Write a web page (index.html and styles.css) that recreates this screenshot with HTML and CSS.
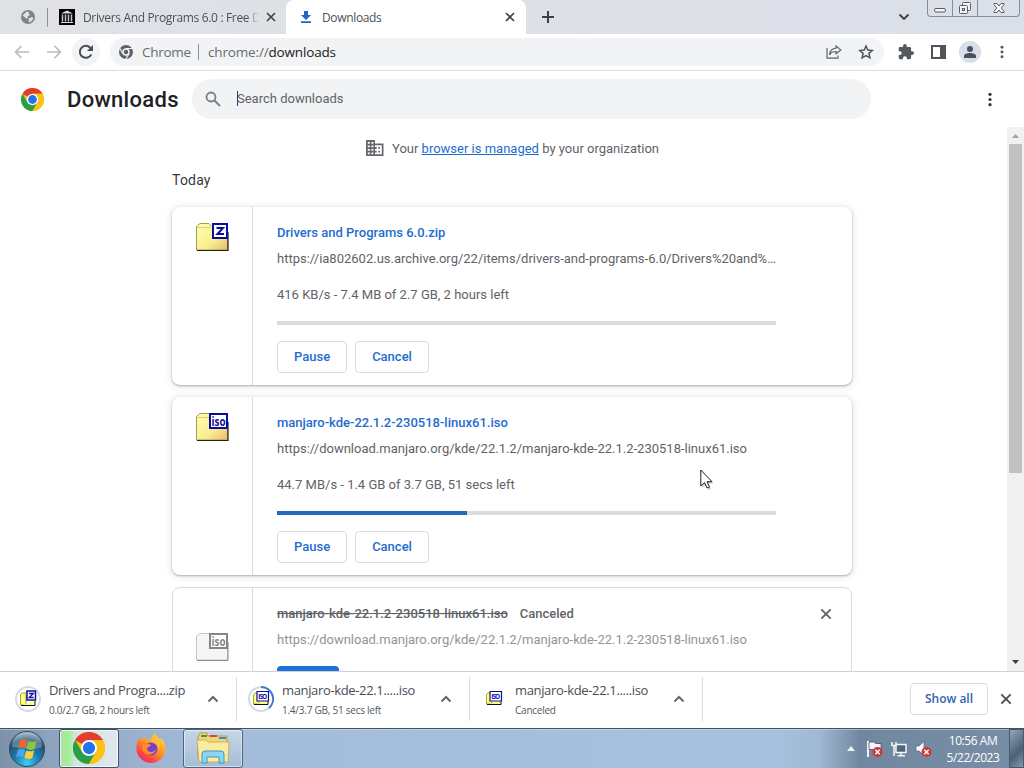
FILE: index.html
```html
<!DOCTYPE html>
<html lang="en">
<head>
    <meta charset="UTF-8">
    <meta name="viewport" content="width=device-width, initial-scale=1.0">
    <title>Downloads</title>
    <link rel="stylesheet" href="styles.css">
</head>
<body>

    <!-- Shared icons -->
    <svg class="defs" width="0" height="0">
        <defs>
            <linearGradient id="folder-fill" x1="0" y1="0" x2="1" y2="1">
                <stop offset="0" stop-color="#ffffb0"/>
                <stop offset="0.6" stop-color="#f8ee90"/>
                <stop offset="1" stop-color="#e6b870"/>
            </linearGradient>
            <radialGradient id="orb" cx="0.5" cy="0.9" r="0.9">
                <stop offset="0" stop-color="#3fd0f0"/>
                <stop offset="0.4" stop-color="#1b7cb4"/>
                <stop offset="0.75" stop-color="#24506f"/>
                <stop offset="1" stop-color="#9fb9c9"/>
            </radialGradient>
            <linearGradient id="fox" x1="0.9" y1="0" x2="0.2" y2="1">
                <stop offset="0" stop-color="#ffe14a"/>
                <stop offset="0.45" stop-color="#ff9a26"/>
                <stop offset="0.8" stop-color="#fb4343"/>
                <stop offset="1" stop-color="#ee2474"/>
            </linearGradient>
            <symbol id="chrome" viewBox="0 0 48 48">
                <circle cx="24" cy="24" r="24" fill="#fbc116"/>
                <path d="M24 24 3.2 12A24 24 0 0 1 44.8 12H24z" fill="#e33b2e"/>
                <path d="M3.2 12A24 24 0 0 0 24 48L34.4 30 24 24 13.6 30z" fill="#2a9f48"/>
                <path d="M24 12h20.8A24 24 0 0 1 24 48l10.4-18z" fill="#fbc116"/>
                <circle cx="24" cy="24" r="12" fill="#fff"/>
                <circle cx="24" cy="24" r="9.2" fill="#2274e8"/>
            </symbol>
            <symbol id="close" viewBox="0 0 12 12">
                <path d="M2 2l8 8M10 2l-8 8" stroke="currentColor" stroke-width="1.6" fill="none"/>
            </symbol>
            <symbol id="chevron-up" viewBox="0 0 12 12">
                <path d="M1.5 8.5 6 4l4.5 4.5" stroke="currentColor" stroke-width="2" fill="none"/>
            </symbol>
            <symbol id="folder" viewBox="0 0 33 30">
                <path d="M.5 28V4.5L4 1.5h9l3 3h15.500V28z" fill="url(#folder-fill)" stroke="#a59d4c"/>
                <path d="M1 28.500h31V10" fill="none" stroke="#26220c" stroke-width="1.200"/>
                <path d="M1 5.500h14" fill="none" stroke="#d8d080"/>
            </symbol>
            <symbol id="dots" viewBox="0 0 4 16">
                <circle cx="2" cy="2.500" r="1.700"/><circle cx="2" cy="8" r="1.700"/><circle cx="2" cy="13.500" r="1.700"/>
            </symbol>
        </defs>
    </svg>

    <div class="tab-strip">
        <div class="tab tab-pinned">
            <svg width="14" height="14" viewBox="0 0 14 14">
                <circle cx="7" cy="7" r="7" fill="#7f8388"/>
                <path d="M1.500 5.500 5 2l3-.5-.5 2L9 5 6.500 6.500 7 8l-2 .5-2-2z" fill="#dee1e6"/>
                <path d="M7.500 8.500 11 7l1.500 1-1.500 3-3 1.500z" fill="#dee1e6"/>
            </svg>
        </div>
        <div class="tab tab-archive">
            <svg width="16" height="16" viewBox="0 0 16 16">
                <path d="M0 0h16v16H0z" fill="#000"/>
                <path d="M2 4.500 8 1.500l6 3z" fill="#ddd"/>
                <path d="M3.500 5.500v7M6.500 5.500v7M9.500 5.500v7M12.500 5.500v7" stroke="#c8c8c8" stroke-width="1.500"/>
                <path d="M2 13.500h12" stroke="#ddd"/>
            </svg>
            <span class="tab-title">Drivers And Programs 6.0 : Free D</span>
            <svg class="tab-close" width="12" height="12"><use href="#close"/></svg>
        </div>
        <div class="tab tab-active">
            <svg width="10" height="12" viewBox="0 0 10 12">
                <path d="M3 0h4v4h3L5 9 0 4h3zM0 10.300h10V12H0z" fill="#1f66c8"/>
            </svg>
            <span class="tab-title">Downloads</span>
            <svg class="tab-close" width="12" height="12"><use href="#close"/></svg>
        </div>
        <svg class="new-tab" width="12" height="12" viewBox="0 0 12 12">
            <path d="M6 0v12M0 6h12" stroke="#3c4043" stroke-width="2"/>
        </svg>
        <svg class="tab-search" width="12" height="8" viewBox="0 0 12 8">
            <path d="M1.500 1.500 6 6l4.500-4.500" stroke="#3c4043" stroke-width="1.800" fill="none"/>
        </svg>
        <div class="window-controls">
            <span class="wc">
                <svg width="14" height="16" viewBox="0 0 14 16"><rect x="1.500" y="8.500" width="11" height="3.500" rx="1.500" fill="#f4f6f8" stroke="#555d68"/></svg>
            </span>
            <span class="wc">
                <svg width="14" height="16" viewBox="0 0 14 16" fill="#f4f6f8" stroke="#555d68">
                    <rect x="4.500" y="2.500" width="8" height="8" rx="1"/>
                    <rect x="1.500" y="5.500" width="8" height="8" rx="1"/>
                    <rect x="4.500" y="8.500" width="2" height="2"/>
                </svg>
            </span>
            <span class="wc wc-close">
                <svg width="14" height="16" viewBox="0 0 14 16"><path d="M2 3.500h3L7 6l2-2.500h3v1L9.300 8l2.700 3.500v1H9L7 10l-2 2.500H2v-1L4.700 8 2 4.500z" fill="#f4f6f8" stroke="#555d68"/></svg>
            </span>
        </div>
    </div>

    <div class="toolbar">
        <svg class="nav-back" width="16" height="14" viewBox="0 0 16 14"><path d="M15 7H2M7.500 1 1.500 7l6 6" fill="none" stroke="#b9bbbe" stroke-width="1.700"/></svg>
        <svg class="nav-forward" width="16" height="14" viewBox="0 0 16 14"><path d="M1 7h13M8.500 1l6 6-6 6" fill="none" stroke="#b9bbbe" stroke-width="1.700"/></svg>
        <span class="reload">
            <svg width="16" height="16" viewBox="0 0 16 16">
                <path d="M13.300 10.300A6 6 0 1 1 12.200 3.700L14 5.500" fill="none" stroke="#4a4d51" stroke-width="2"/>
                <path d="M15 1v6H9z" fill="#4a4d51"/>
            </svg>
        </span>
        <div class="omnibox">
            <svg width="14" height="14" viewBox="0 0 14 14">
                <circle cx="7" cy="7" r="7" fill="#5f6368"/>
                <circle cx="7" cy="7" r="3" fill="#5f6368" stroke="#f1f3f4" stroke-width="1.400"/>
                <path d="M7 3.500h6.300M4 8.800.9 3.500M10 8.800 6.800 14" stroke="#f1f3f4" stroke-width="1.200"/>
            </svg>
            <span class="origin">Chrome</span>
            <span class="divider"></span>
            <span class="url">chrome://<b>downloads</b></span>
            <svg class="share" width="16" height="14" viewBox="0 0 16 14" fill="none" stroke="#5f6368" stroke-width="1.200">
                <path d="M1 3v10.200h11V10.500"/>
                <path d="M10 1l4.800 3.900L10 8.800V6.500C7 6.400 5 7.500 3.500 9.800 4 6 6.300 3.600 10 3.200z"/>
            </svg>
            <svg class="star" width="16" height="16" viewBox="0 0 16 16">
                <path d="M8 2l1.800 4.100 4.500.4-3.400 2.900 1 4.400L8 11.500l-3.900 2.300 1-4.400L1.700 6.500l4.500-.4z" fill="none" stroke="#505458" stroke-width="1.500"/>
            </svg>
        </div>
        <svg class="ext" width="16" height="16" viewBox="1 1 22 22"><path d="M20.500 11H19V7a2 2 0 0 0-2-2h-4V3.500a2.500 2.500 0 0 0-5 0V5H4a2 2 0 0 0-2 2v3.800h1.500a2.700 2.700 0 0 1 0 5.400H2V20a2 2 0 0 0 2 2h3.800v-1.500a2.700 2.700 0 0 1 5.400 0V22H17a2 2 0 0 0 2-2v-4h1.500a2.500 2.500 0 0 0 0-5z" fill="#55585c"/></svg>
        <svg class="side-panel" width="15" height="14" viewBox="0 0 15 14"><path d="M0 0h15v14H0zM2 2v10h7V2z" fill="#505458" fill-rule="evenodd"/></svg>
        <span class="avatar">
            <svg width="12" height="12" viewBox="0 0 12 12"><circle cx="6" cy="3" r="3" fill="#48525e"/><path d="M0 12V10c0-2 3-3 6-3s6 1 6 3v2z" fill="#48525e"/></svg>
        </span>
        <svg class="menu" width="4" height="14" fill="#55585c"><use href="#dots"/></svg>
    </div>

    <header class="page-header">
        <svg width="23" height="23"><use href="#chrome"/></svg>
        <h1>Downloads</h1>
        <div class="search">
            <svg width="16" height="16" viewBox="0 0 16 16"><circle cx="6" cy="6" r="4.500" fill="none" stroke="#7c8084" stroke-width="1.800"/><path d="M9.500 9.500 15 15" stroke="#7c8084" stroke-width="2"/></svg>
            <span class="caret"></span><span class="placeholder">Search downloads</span>
        </div>
        <svg class="more" width="4" height="15" fill="#303338"><use href="#dots"/></svg>
    </header>

    <div class="page">
        <main class="downloads">
            <div class="managed">
                <svg width="18" height="16" viewBox="0 0 18 16">
                    <path d="M0 0h9v3.500h8.500V16H0z" fill="#65686c"/>
                    <path d="M1.800 2h2v1.700h-2zM5.400 2h2v1.700h-2zM1.800 5.500h2v1.700h-2zM5.400 5.500h2v1.700h-2zM1.800 9h2v1.700h-2zM5.400 9h2v1.700h-2zM1.800 12.500h2v1.700h-2zM5.400 12.500h2v1.700h-2zM9 5.200h6.800v9.100H9v-1.800h1.700v-1.700H9V9h1.700V7H9z" fill="#fff"/>
                    <path d="M12.300 7H14v1.800h-1.700zM12.300 10.700H14v1.800h-1.700z" fill="#65686c"/>
                </svg>
                <span>Your <a href="#">browser is managed</a> by your organization</span>
            </div>
            <div class="date">Today</div>

            <div class="card">
                <div class="file-icon">
                    <svg width="33" height="30" viewBox="0 0 33 30">
                        <use href="#folder"/>
                        <rect x="17" y="2" width="14" height="14" fill="#fff" stroke="#0c0c9c" stroke-width="2"/>
                        <path d="M20.500 6h6.500L21.500 12h6.500" fill="none" stroke="#0c0c9c" stroke-width="2"/>
                    </svg>
                </div>
                <div class="details">
                    <div class="name"><a>Drivers and Programs 6.0.zip</a></div>
                    <div class="link">https://ia802602.us.archive.org/22/items/drivers-and-programs-6.0/Drivers%20and%…</div>
                    <div class="status">416 KB/s - 7.4 MB of 2.7 GB, 2 hours left</div>
                    <div class="progress"><div class="bar" style="width: 0%"></div></div>
                    <div class="buttons"><button class="btn">Pause</button><button class="btn">Cancel</button></div>
                </div>
            </div>

            <div class="card">
                <div class="file-icon">
                    <svg width="33" height="30" viewBox="0 0 33 30">
                        <use href="#folder"/>
                        <rect x="14" y="2" width="17" height="14" fill="#fff" stroke="#0c0c9c" stroke-width="2"/>
                        <text class="iso" x="15.500" y="13.500" textLength="14" lengthAdjust="spacingAndGlyphs">iso</text>
                    </svg>
                </div>
                <div class="details">
                    <div class="name"><a>manjaro-kde-22.1.2-230518-linux61.iso</a></div>
                    <div class="link">https://download.manjaro.org/kde/22.1.2/manjaro-kde-22.1.2-230518-linux61.iso</div>
                    <div class="status">44.7 MB/s - 1.4 GB of 3.7 GB, 51 secs left</div>
                    <div class="progress"><div class="bar" style="width: 38%"></div></div>
                    <div class="buttons"><button class="btn">Pause</button><button class="btn">Cancel</button></div>
                </div>
            </div>

            <div class="card card-canceled">
                <div class="file-icon">
                    <svg width="33" height="30" viewBox="0 0 33 30">
                        <path d="M.5 28V4.500L4 1.500h9l3 3h15.500V28z" fill="#f6f6f6" stroke="#c4c4c4"/>
                        <path d="M1 28.500h31V10" fill="none" stroke="#8c8c8c"/>
                        <rect x="14" y="2" width="17" height="14" fill="#fff" stroke="#868686" stroke-width="2"/>
                        <text class="iso" x="15.500" y="13.500" textLength="14" lengthAdjust="spacingAndGlyphs">iso</text>
                    </svg>
                </div>
                <div class="details">
                    <div class="name"><s>manjaro-kde-22.1.2-230518-linux61.iso</s><span class="tag">Canceled</span>
                        <svg class="remove" width="14" height="14"><use href="#close"/></svg>
                    </div>
                    <div class="link">https://download.manjaro.org/kde/22.1.2/manjaro-kde-22.1.2-230518-linux61.iso</div>
                    <button class="btn btn-retry" aria-label="Retry"></button>
                </div>
            </div>
        </main>

        <div class="scrollbar">
            <svg width="7" height="4" viewBox="0 0 7 4"><path d="M0 4 3.500 0 7 4z" fill="#a3a3a3"/></svg>
            <div class="thumb"></div>
            <svg class="down" width="7" height="4" viewBox="0 0 7 4"><path d="M0 0 3.500 4 7 0z" fill="#404040"/></svg>
        </div>

        <svg class="cursor" width="16" height="23" viewBox="0 0 16 23">
            <path d="M2 3v16l4-3.500L8.500 21l2.500-1-2.500-5.500h5z" fill="#000" opacity="0.200"/>
            <path d="M.8 1v16l3.700-3.500L7 19l2.500-1-2.500-5.300h5z" fill="#fff" stroke="#222"/>
        </svg>
    </div>

    <div class="shelf">
        <div class="shelf-item">
            <svg width="26" height="26" viewBox="0 0 26 26">
                <circle cx="13" cy="13" r="12" fill="none" stroke="#cfdce8" stroke-width="2"/>
                <path d="M5.500 19V8.500L7 7h4v12z" fill="#ffff80" stroke="#a5a535"/><path d="M6 19.500h14V15" fill="#ffff80" stroke="#111"/>
                <path d="M12 5h8.500v9H12z" fill="#fff" stroke="#10109c" stroke-width="1.500"/>
                <path d="M14 7.500h4.300L14.200 11.500h4.500" fill="none" stroke="#10109c" stroke-width="1.300"/>
            </svg>
            <div class="shelf-text"><span class="shelf-name">Drivers and Progra....zip</span><small>0.0/2.7 GB, 2 hours left</small></div>
            <svg class="chev" width="12" height="12"><use href="#chevron-up"/></svg>
        </div>
        <div class="shelf-item">
            <svg width="26" height="26" viewBox="0 0 26 26">
                <circle cx="13" cy="13" r="12" fill="none" stroke="#cfdce8" stroke-width="2"/>
                <path d="M13 1a12 12 0 0 1 8 21" fill="none" stroke="#4678c8" stroke-width="2"/>
                <path d="M5.500 18V8.500L7 7h4v11z" fill="#ffff80" stroke="#a5a535"/><path d="M6 18.500h14V15" fill="#ffff80" stroke="#111"/>
                <path d="M9 5.500h11.500v9.500H9z" fill="#fff" stroke="#10109c" stroke-width="1.200"/>
                <text class="iso-small" x="10.200" y="12.800" textLength="9">ISO</text>
            </svg>
            <div class="shelf-text"><span class="shelf-name">manjaro-kde-22.1.....iso</span><small>1.4/3.7 GB, 51 secs left</small></div>
            <svg class="chev" width="12" height="12"><use href="#chevron-up"/></svg>
        </div>
        <div class="shelf-item">
            <svg width="26" height="26" viewBox="0 0 26 26">
                <path d="M5.500 18V8.500L7 7h4v11z" fill="#ffff80" stroke="#a5a535"/><path d="M6 18.500h14V15" fill="#ffff80" stroke="#111"/>
                <path d="M9 5.500h11.500v9.500H9z" fill="#fff" stroke="#10109c" stroke-width="1.200"/>
                <text class="iso-small" x="10.200" y="12.800" textLength="9">ISO</text>
            </svg>
            <div class="shelf-text"><span class="shelf-name">manjaro-kde-22.1.....iso</span><small>Canceled</small></div>
            <svg class="chev" width="12" height="12"><use href="#chevron-up"/></svg>
        </div>
        <button class="show-all">Show all</button>
        <svg class="shelf-close" width="14" height="14"><use href="#close"/></svg>
    </div>

    <div class="taskbar">
        <svg class="start" width="38" height="38" viewBox="0 0 38 38">
            <circle cx="19" cy="19" r="17.500" fill="url(#orb)" stroke="#2c4a63"/>
            <path d="M4 17a15 15 0 0 1 30 0c-9 4-20 0-30 0z" fill="#fff" opacity="0.250"/>
            <path d="M12 10.500c2.500-1.700 5-1.700 7.300-.3L17.500 18c-2.300-1.200-4.700-1-7.300.5z" fill="#f0662e"/>
            <path d="M20.500 11c2.500 1.200 5.200 1.200 8-.3L26.500 19c-2.700 1.300-5.300 1.100-8-.2z" fill="#8cc63e"/>
            <path d="M9.800 20c2.600-1.500 5-1.500 7.300-.3L15.300 27c-2.300-1.200-4.700-1-7.300.5z" fill="#4aa6e4"/>
            <path d="M18.200 20.500c2.500 1.200 5.200 1.200 8-.3L24.300 28c-2.700 1.300-5.300 1.100-8-.2z" fill="#fccf3a"/>
        </svg>
        <div class="task task-chrome"><svg width="32" height="32"><use href="#chrome"/></svg></div>
        <div class="task task-firefox">
            <svg width="32" height="32" viewBox="0 0 32 32">
                <path d="M20 1c1 3 3 4 5 7l1-2c4 4 5 8 4.500 12A14.600 14.600 0 0 1 1.500 18C1 13 2 9 5 5l1.500 3 3-3.500L12 8l4-1c1-2 2-4 4-6z" fill="url(#fox)"/>
                <circle cx="16" cy="17" r="6.500" fill="#7140d0"/>
                <path d="M8 12c3-2 6 0 8 1-1 2-4 2-4 4 1 4 7 4 9 0-1 7-12 8-14 0z" fill="#ff8a2a"/>
                <path d="M16 10c5-1 8 3 7 8 4-5 1-12-5-12z" fill="#ffbd38"/>
            </svg>
        </div>
        <div class="task task-explorer">
            <svg width="34" height="32" viewBox="0 0 34 32">
                <path d="M2 5 4 1h7l1 3h19v22H2z" fill="#f0d67b" stroke="#b28c34" stroke-width="0.800"/>
                <path d="M5 3h6v2H5z" fill="#35a04c"/><path d="M14 3h7v2h-7z" fill="#d9482e"/><path d="M23 5h7v2h-7z" fill="#3c86d8"/>
                <path d="M1 8h9l2 2h21l-1 20H3z" fill="#faeba0" stroke="#c7a548" stroke-width="0.800"/>
                <path d="M6 31V22q0-3 3-3h16q3 0 3 3v9h-5v-6H11v6z" fill="#8ed3ef" stroke="#3d98c2"/>
            </svg>
        </div>
        <div class="tray">
            <svg class="tray-up" width="8" height="5" viewBox="0 0 8 5"><path d="M0 5 4 0l4 5z" fill="#f0f4f8"/></svg>
            <svg width="17" height="18" viewBox="0 0 17 18">
                <path d="M2 1v16" stroke="#fff" stroke-width="1.800"/><path d="M3 2h5l1.500 1.500H15V11H9L7.500 9.500H3z" fill="#f4f6f8" stroke="#39434f" stroke-width="0.700"/>
                <circle cx="11.500" cy="12" r="5" fill="#cf3838"/><path d="M9.300 9.800l4.400 4.400M13.700 9.800l-4.400 4.400" stroke="#fff" stroke-width="1.500"/>
            </svg>
            <svg width="16" height="16" viewBox="0 0 16 16" fill="none" stroke="#f4f6f8" stroke-width="1.500">
                <rect x="5" y="3.500" width="10" height="8" fill="#52667c"/><path d="M10 12v2.500M6.500 14.800H14M1 1v3.500h4V1M3 4.500V15"/>
            </svg>
            <svg width="17" height="18" viewBox="0 0 17 18">
                <path d="M1 6h3l5-4.500v14L4 11H1z" fill="#f7f8fa" stroke="#4a5665" stroke-width="0.600"/>
                <circle cx="11.500" cy="12" r="5" fill="#cf3838"/><path d="M9.300 9.800l4.400 4.400M13.700 9.800l-4.400 4.400" stroke="#fff" stroke-width="1.500"/>
            </svg>
            <div class="clock"><span class="time">10:56 AM</span><span>5/22/2023</span></div>
            <div class="show-desktop"></div>
        </div>
    </div>

</body>
</html>
```

FILE: styles.css
```css
:root {
    --blue: #1f6ccf;
    --text: #202124;
    --muted: #5f6368;
    --line: #dadce0;
    --field: #f1f3f4;
}

* {
    box-sizing: border-box;
}

body {
    margin: 0;
    width: 1024px;
    height: 768px;
    overflow: hidden;
    display: flex;
    flex-direction: column;
    font-family: Roboto, sans-serif;
    font-size: 13px;
    color: var(--text);
    background: white;
}

svg {
    flex: none;
    display: block;
}

.defs {
    position: absolute;
}

/* Tab strip */
.tab-strip {
    height: 34px;
    flex: none;
    display: flex;
    align-items: center;
    background: linear-gradient(90deg, #dfe1e5, #dbdfe8);
    font-family: "Open Sans", "Noto Sans", sans-serif;
    font-size: 12px;
}

.tab {
    height: 34px;
    display: flex;
    align-items: center;
}

.tab-pinned {
    width: 48px;
    padding-left: 21px;
}

.tab-pinned::after {
    content: "";
    width: 1px;
    height: 19px;
    margin-left: 12px;
    background: #8c9096;
}

.tab-archive {
    width: 238px;
    padding-left: 11px;
}

.tab-title {
    flex: 1;
    white-space: nowrap;
    color: #4c5056;
    letter-spacing: -0.34px;
}

.tab-archive .tab-title {
    margin: 0 3px 0 8px;
    -webkit-mask-image: linear-gradient(90deg, #000 164px, transparent 176px);
    mask-image: linear-gradient(90deg, #000 164px, transparent 176px);
}

.tab-close {
    margin-right: 9px;
    color: #3c4043;
}

.tab-active {
    width: 240px;
    padding-left: 15px;
    background: white;
    border-radius: 8px 8px 0 0;
}

.tab-active .tab-title {
    margin-left: 11px;
}

.tab-active .tab-close {
    margin-right: 10px;
}

.new-tab {
    margin-left: 16px;
}

.tab-search {
    margin-left: auto;
    margin-right: 17px;
}

.window-controls {
    display: flex;
    align-self: flex-start;
    width: 93px;
    height: 17px;
    margin-right: 4px;
    border: 1px solid #858d98;
    border-top: 0;
    border-radius: 0 0 4px 4px;
}

.wc {
    width: 25px;
    display: flex;
    justify-content: center;
    border-right: 1px solid #858d98;
}

.wc-close {
    flex: 1;
    border-right: 0;
}

/* Toolbar */
.toolbar {
    height: 37px;
    flex: none;
    display: flex;
    align-items: center;
    padding-left: 14px;
    border-bottom: 1px solid var(--line);
}

.nav-forward {
    margin-left: 16px;
}

.reload {
    width: 28px;
    height: 28px;
    margin: 0 10px;
    display: flex;
    align-items: center;
    justify-content: center;
    border-radius: 50%;
    background: var(--field);
}

.omnibox {
    width: 774px;
    height: 28px;
    display: flex;
    align-items: center;
    padding-left: 9px;
    border-radius: 14px;
    background: var(--field);
    font-family: "Open Sans", "Noto Sans", sans-serif;
    font-size: 13.500px;
    color: #686c70;
}

.origin {
    margin-left: 9px;
    width: 47px;
    letter-spacing: -0.3px;
}

.divider {
    width: 1px;
    height: 16px;
    margin: 0 9px;
    background: #8e9195;
}

.url {
    letter-spacing: -0.16px;
}

.url b {
    font-weight: 400;
    color: var(--text);
}

.share {
    margin-left: auto;
}

.star {
    margin: 0 10px 0 16px;
}

.ext {
    margin-left: 14px;
}

.side-panel {
    margin-left: 17px;
}

.avatar {
    width: 22px;
    height: 22px;
    margin-left: 13px;
    display: flex;
    align-items: center;
    justify-content: center;
    border-radius: 50%;
    background: #d8dfe7;
}

.menu {
    margin-left: 19px;
}

/* Downloads header */
.page-header {
    height: 56px;
    flex: none;
    display: flex;
    align-items: center;
    padding-left: 21px;
}

.page-header h1 {
    width: 125px;
    margin: 0 0 0 23px;
    font-size: 22px;
    font-weight: 500;
    letter-spacing: 0.3px;
}

.search {
    width: 679px;
    height: 40px;
    display: flex;
    align-items: center;
    padding: 0 0 1px 13px;
    border-radius: 20px;
    background: var(--field);
}

.caret {
    width: 1px;
    height: 15px;
    margin-left: 16px;
    background: #303a80;
}

.placeholder {
    margin-left: -1px;
    color: var(--muted);
}

.more {
    margin-left: 117px;
}

/* Page body */
.page {
    flex: 1;
    min-height: 0;
    display: flex;
    position: relative;
}

.downloads {
    flex: 1;
    padding-left: 172px;
    overflow: hidden;
}

.managed {
    display: flex;
    align-items: center;
    height: 16px;
    margin: 13px 0 0 194px;
    gap: 8px;
    color: var(--muted);
}

.managed a {
    color: var(--blue);
}

.date {
    margin: 16px 0 18px;
    height: 17px;
    line-height: 17px;
    font-size: 14px;
    letter-spacing: 0.2px;
    color: #36393d;
}

.card {
    width: 680px;
    height: 178px;
    margin-bottom: 12px;
    display: flex;
    border-radius: 8px;
    background: white;
    box-shadow: 0 1px 2px rgba(60, 64, 67, 0.35), 0 1px 6px 1px rgba(60, 64, 67, 0.15);
}

.file-icon {
    width: 81px;
    padding: 15px 0 0 24px;
    border-right: 1px solid var(--line);
}

.iso {
    font-family: "Open Sans", sans-serif;
    font-weight: 700;
    font-size: 12.500px;
    fill: #0c0c9c;
}

.details {
    flex: 1;
    padding: 16px 24px 0;
}

.name {
    height: 20px;
    line-height: 20px;
    display: flex;
    font-weight: 500;
    color: var(--blue);
}

.link {
    margin-top: 6px;
    line-height: 20px;
    white-space: nowrap;
    color: var(--muted);
}

.status {
    margin-top: 16px;
    line-height: 20px;
    color: var(--muted);
}

.progress {
    width: 499px;
    height: 4px;
    margin-top: 16px;
    background: #dcdcdc;
}

.bar {
    height: 4px;
    background: #2469c0;
}

.buttons {
    display: flex;
    gap: 8px;
    margin-top: 16px;
}

.btn {
    height: 32px;
    padding: 0 16px 2px;
    border: 1px solid var(--line);
    border-radius: 4px;
    background: white;
    color: var(--blue);
    font: 500 13px Roboto, sans-serif;
}

.card-canceled {
    border: 1px solid var(--line);
    box-shadow: none;
}

.card-canceled .file-icon {
    width: 80px;
    padding: 44px 0 0 23px;
}

.card-canceled .iso {
    fill: #868686;
}

.card-canceled .name {
    color: var(--muted);
}

.card-canceled .link {
    color: #929598;
}

.tag {
    margin-left: 12px;
}

.remove {
    margin: 3px -6px 0 auto;
}

.btn-retry {
    width: 62px;
    margin-top: 16px;
    border: 0;
    background: #1f70d8;
}

.scrollbar {
    width: 17px;
    display: flex;
    flex-direction: column;
    align-items: center;
    padding: 7px 0;
    background: #f1f1f1;
}

.thumb {
    width: 13px;
    height: 329px;
    margin-top: 6px;
    background: #c1c1c1;
}

.down {
    margin-top: auto;
}

.cursor {
    position: absolute;
    left: 700px;
    top: 342px;
}

/* Download shelf */
.shelf {
    height: 57px;
    flex: none;
    display: flex;
    align-items: center;
    padding-bottom: 2px;
    border-top: 1px solid #d0d2d5;
    font-family: "Open Sans", "Noto Sans", sans-serif;
}

.shelf-item {
    width: 233px;
    height: 44px;
    display: flex;
    align-items: center;
    padding-left: 11px;
    border-right: 1px solid var(--line);
}

.shelf-item:first-child {
    width: 237px;
    padding-left: 15px;
}

.shelf-text {
    width: 150px;
    margin-left: 8px;
    display: flex;
    flex-direction: column;
    white-space: nowrap;
    color: #4a4d51;
}

.shelf-name {
    line-height: 18px;
    letter-spacing: -0.35px;
}

.shelf-text small {
    margin-top: 3px;
    line-height: 16px;
    font-size: 10px;
    letter-spacing: -0.24px;
    color: #55585c;
}

.iso-small {
    font-family: "Open Sans", sans-serif;
    font-weight: 700;
    font-size: 6.500px;
    fill: #10109c;
}

.chev {
    margin-left: 8px;
    color: #65686c;
}

.show-all {
    width: 78px;
    height: 32px;
    margin-left: auto;
    padding-bottom: 3px;
    border: 1px solid var(--line);
    border-radius: 4px;
    background: white;
    color: #3263b4;
    font: 600 12px "Open Sans", "Noto Sans", sans-serif;
}

.shelf-close {
    margin: 0 11px;
    color: #4c4f53;
}

/* Windows taskbar */
.taskbar {
    height: 40px;
    flex: none;
    display: flex;
    align-items: center;
    border-top: 1px solid #405268;
    background: linear-gradient(90deg, #7d91a8 0, #8da4bf 5%, #a3bcda 20%, #a6c1de 76%, #a0b9d4 80%, #71879f 84%, #788da6 100%);
    box-shadow: inset 0 1px 0 rgba(220, 230, 240, 0.5);
}

.start {
    margin-left: 8px;
}

.task {
    width: 60px;
    height: 39px;
    display: flex;
    align-items: center;
    justify-content: center;
    padding-bottom: 2px;
    border-radius: 3px;
}

.task-chrome {
    margin-left: 13px;
    border: 1px solid #3f5168;
    box-shadow: inset 0 0 0 1px rgba(255, 255, 255, 0.7);
    background: linear-gradient(90deg, #b5ddb4 0, #9df08e 14%, #d2e3e0 26%, #dfe7ef);
}

.task-firefox {
    margin-left: 2px;
}

.task-explorer {
    margin-left: 2px;
    border: 1px solid #4e6580;
    box-shadow: inset 0 0 0 1px rgba(255, 255, 255, 0.5);
    background: linear-gradient(#c6d6e7, #a5bdd8);
}

.tray {
    margin-left: auto;
    height: 39px;
    display: flex;
    align-items: center;
    gap: 8px;
}

.tray-up {
    margin-right: 3px;
}

.clock {
    width: 64px;
    margin: 0 -4px 0 1px;
    display: flex;
    flex-direction: column;
    align-items: center;
    font-family: "Open Sans", "Noto Sans", sans-serif;
    font-size: 12px;
    line-height: 17px;
    letter-spacing: -0.45px;
    color: white;
}

.show-desktop {
    width: 15px;
    height: 39px;
    border: 1px solid #48596d;
    background: linear-gradient(135deg, #93a5b8, #4c6078 60%, #8497ac);
}
```
